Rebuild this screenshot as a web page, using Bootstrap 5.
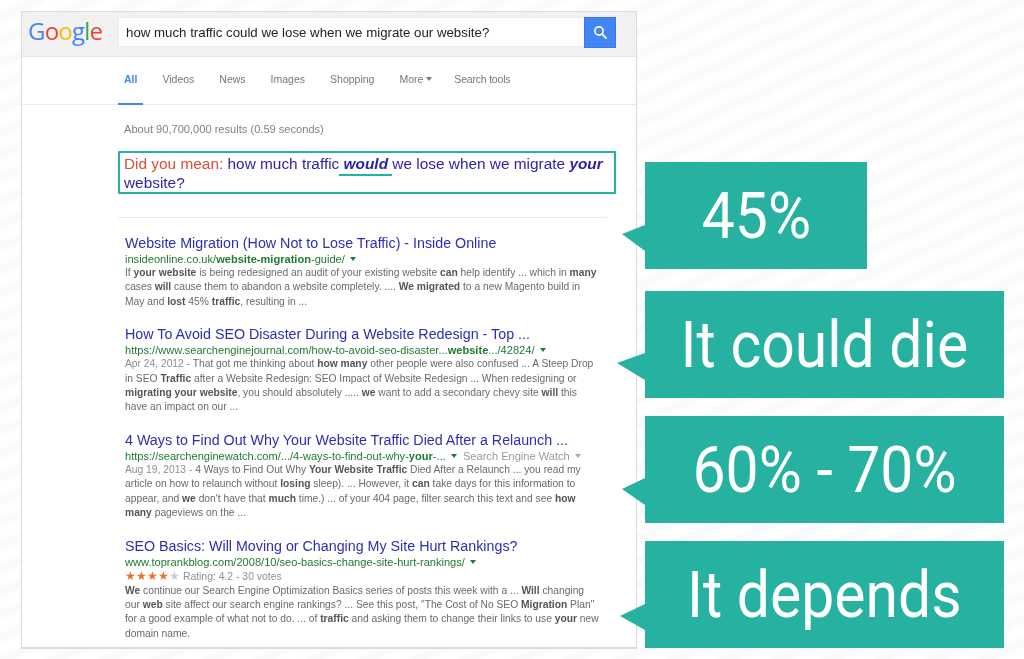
<!DOCTYPE html>
<html lang="en">
<head>
<meta charset="utf-8">
<title>Search results</title>
<link href="https://cdn.jsdelivr.net/npm/bootstrap@5.3.0/dist/css/bootstrap.min.css" rel="stylesheet">
<style>
html,body{height:100%;}
body{width:1024px;height:659px;overflow:hidden;font-family:"Liberation Sans",Arial,sans-serif;
 background:repeating-linear-gradient(-24deg,#fff 0 10px,#f9fafb 12px 19px,#fff 21px);
 padding:11px 0 0 21px;}
.serp{width:616px;height:638px;background:#fff;border:1px solid #dcdcdc;border-bottom-width:2px;filter:blur(.5px);flex:none;overflow:hidden;}
.serp-head{height:45px;background:#f1f1f1;border-bottom:1px solid #e5e5e5;padding:5px 20px 0 6px;}
.logo{width:90px;font-family:"Open Sans",sans-serif;font-size:24px;font-weight:500;letter-spacing:-.8px;line-height:27px;}
.g-b{color:#4285f4}.g-r{color:#ea4335}.g-y{color:#fbbc05}.g-g{color:#34a853}
.qbox{height:30px;background:#fff;border:1px solid #ececec;border-right:0;padding-left:7px;font-size:13.27px;line-height:29px;color:#222;}
.qbtn{width:32px;height:31px;background:#4285f4;border:1px solid #3b78e7;}
.tabs{height:48px;border-bottom:1px solid #ebebeb;padding-left:96px;gap:13px;font-size:10.5px;color:#777;}
.tab{height:48px;line-height:44px;padding:0 6px;}
.tab-last{margin-left:-3px;letter-spacing:-.2px;}
.tab-on{color:#4285f4;font-weight:700;border-bottom:2px solid #4285f4;}
.caret{display:inline-block;border:3px solid transparent;border-top:4px solid #777;border-bottom:0;vertical-align:2px;margin-left:3px;}
.main-col{padding-left:96px;padding-right:21px;}
.stats{font-size:11.1px;color:#808080;margin-top:18px;height:29px;line-height:13px;padding-left:6px;}
.dym{width:498px;height:43px;border:2px solid #26b1a1;border-radius:1px;padding:1px 4px;font-size:15.4px;line-height:19px;color:#2a1fa8;position:relative;margin-top:-1px;white-space:nowrap;}
.dym-red{color:#dd4b39}
.mark-line{position:absolute;left:219px;top:21px;width:53px;height:2px;background:#26b1a1;}
.rule{height:1px;background:#ebebeb;margin-top:23px;margin-bottom:17px;width:489px;}
.res{padding-left:7px;margin-bottom:17.5px;}
.res-t{font-size:14.27px;line-height:17px;color:#2f2db6;white-space:nowrap;}
.res-u{font-size:11.09px;line-height:14px;color:#1f7a30;white-space:nowrap;}
.res-s{font-size:10.28px;line-height:14.3px;color:#6a6a6a;white-space:nowrap;}
.res-s b,.res-u b{font-weight:700;}
.res-s b{color:#555}
.res-d{color:#8e8e8e}
.res-m{color:#9a9a9a;}
.tri{display:inline-block;border:3px solid transparent;border-top:4px solid #1f7a30;border-bottom:0;vertical-align:2px;margin-left:5px;}
.tri-g{border-top-color:#aaa;}
.stars{color:#e8702a;font-size:11.5px;}
.star-off{color:#ccc}
.rating{font-size:10.4px;line-height:14px;color:#8e8e8e;white-space:nowrap;}
.notes{margin-left:8px;padding-top:151px;gap:18px;}
.note{position:relative;height:107px;background:#26b1a1;color:#fff;font-family:Roboto,sans-serif;font-size:64px;line-height:110px;text-align:center;}
.note-a{width:222px;margin-bottom:4px;}
.note-b{width:359px;}
.note-txt{display:inline-block;transform:scaleX(.92);transform-origin:center;white-space:nowrap;}
.tip{position:absolute;top:0;height:107px;left:-28px;width:28px;}
</style>
</head>
<body class="d-flex align-items-start">
<main class="serp">
  <header class="serp-head d-flex">
    <div class="logo"><span class="g-b">G</span><span class="g-r">o</span><span class="g-y">o</span><span class="g-b">g</span><span class="g-g">l</span><span class="g-r">e</span></div>
    <div class="qbox flex-grow-1">how much traffic could we lose when we migrate our website?</div>
    <div class="qbtn d-flex align-items-center justify-content-center">
      <svg width="15" height="15" viewBox="0 0 15 15" fill="none" stroke="#fff" stroke-width="1.7"><circle cx="6" cy="6" r="4.1"/><path d="M9 9l4.6 4.6" stroke-width="2"/></svg>
    </div>
  </header>
  <nav class="tabs d-flex">
    <span class="tab tab-on">All</span>
    <span class="tab">Videos</span>
    <span class="tab">News</span>
    <span class="tab">Images</span>
    <span class="tab">Shopping</span>
    <span class="tab">More<i class="caret"></i></span>
    <span class="tab tab-last">Search tools</span>
  </nav>
  <section class="main-col">
    <div class="stats">About 90,700,000 results (0.59 seconds)</div>
    <div class="dym"><span class="dym-red">Did you mean:</span> how much traffic <b><i>would</i></b> we lose when we migrate <b><i>your</i></b><br>website?<span class="mark-line"></span></div>
    <div class="rule"></div>

    <article class="res">
      <div class="res-t">Website Migration (How Not to Lose Traffic) - Inside Online</div>
      <div class="res-u">insideonline.co.uk/<b>website-migration</b>-guide/<i class="tri"></i></div>
      <div class="res-s">If <b>your website</b> is being redesigned an audit of your existing website <b>can</b> help identify ... which in <b>many</b><br>cases <b>will</b> cause them to abandon a website completely. .... <b>We migrated</b> to a new Magento build in<br>May and <b>lost</b> 45% <b>traffic</b>, resulting in ...</div>
    </article>
    <article class="res">
      <div class="res-t">How To Avoid SEO Disaster During a Website Redesign - Top ...</div>
      <div class="res-u">https://www.searchenginejournal.com/how-to-avoid-seo-disaster...<b>website</b>.../42824/<i class="tri"></i></div>
      <div class="res-s"><span class="res-d">Apr 24, 2012 -</span> That got me thinking about <b>how many</b> other people were also confused ... A Steep Drop<br>in SEO <b>Traffic</b> after a Website Redesign: SEO Impact of Website Redesign ... When redesigning or<br><b>migrating your website</b>, you should absolutely ..... <b>we</b> want to add a secondary chevy site <b>will</b> this<br>have an impact on our ...</div>
    </article>
    <article class="res">
      <div class="res-t">4 Ways to Find Out Why Your Website Traffic Died After a Relaunch ...</div>
      <div class="res-u">https://searchenginewatch.com/.../4-ways-to-find-out-why-<b>your</b>-...<i class="tri"></i> &nbsp;<span class="res-m">Search Engine Watch</span><i class="tri tri-g"></i></div>
      <div class="res-s"><span class="res-d">Aug 19, 2013 -</span> 4 Ways to Find Out Why <b>Your Website Traffic</b> Died After a Relaunch ... you read my<br>article on how to relaunch without <b>losing</b> sleep). ... However, it <b>can</b> take days for this information to<br>appear, and <b>we</b> don't have that <b>much</b> time.) ... of your 404 page, filter search this text and see <b>how</b><br><b>many</b> pageviews on the ...</div>
    </article>
    <article class="res">
      <div class="res-t">SEO Basics: Will Moving or Changing My Site Hurt Rankings?</div>
      <div class="res-u">www.toprankblog.com/2008/10/seo-basics-change-site-hurt-rankings/<i class="tri"></i></div>
      <div class="rating"><span class="stars">★★★★<span class="star-off">★</span></span> Rating: 4.2 - 30 votes</div>
      <div class="res-s"><b>We</b> continue our Search Engine Optimization Basics series of posts this week with a ... <b>Will</b> changing<br>our <b>web</b> site affect our search engine rankings? ... See this post, "The Cost of No SEO <b>Migration</b> Plan"<br>for a good example of what not to do. ... of <b>traffic</b> and asking them to change their links to use <b>your</b> new<br>domain name.</div>
    </article>
  </section>
</main>
<aside class="notes d-flex flex-column">
  <div class="note note-a">
    <svg class="tip" viewBox="0 0 28 107"><polygon points="5,72 28,63 28,89" fill="#26b1a1"/></svg>
    <span class="note-txt">45%</span>
  </div>
  <div class="note note-b">
    <svg class="tip" viewBox="0 0 28 107"><polygon points="0,72 28,62 28,89" fill="#26b1a1"/></svg>
    <span class="note-txt">It could die</span>
  </div>
  <div class="note note-b">
    <svg class="tip" viewBox="0 0 28 107"><polygon points="5,73 28,62 28,89" fill="#26b1a1"/></svg>
    <span class="note-txt">60% - 70%</span>
  </div>
  <div class="note note-b">
    <svg class="tip" viewBox="0 0 28 107"><polygon points="3,75 28,63 28,89" fill="#26b1a1"/></svg>
    <span class="note-txt">It depends</span>
  </div>
</aside>
<script src="https://cdn.jsdelivr.net/npm/bootstrap@5.3.0/dist/js/bootstrap.bundle.min.js"></script>
</body>
</html>
